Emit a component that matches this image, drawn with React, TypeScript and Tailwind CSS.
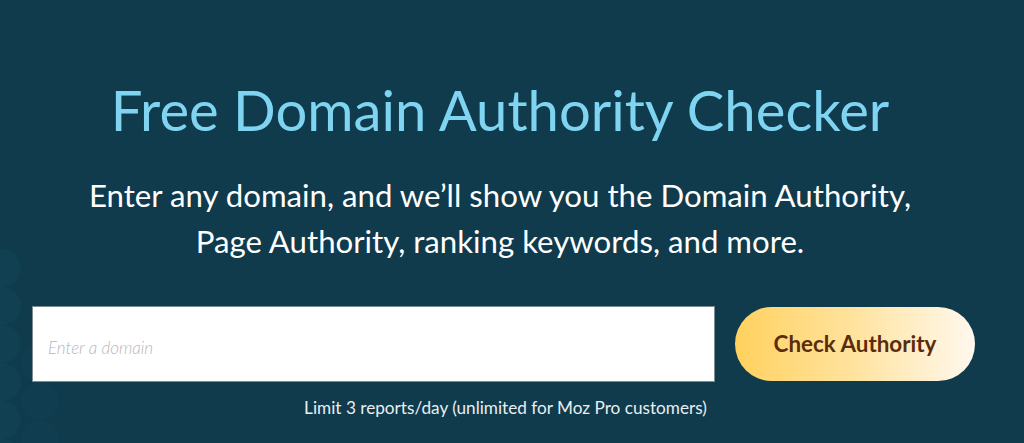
import { useState } from 'react'

// Faint circle pattern at the left edge
function DotPattern() {
  const rows = [268, 306, 344, 382, 420, 458]
  return (
    <svg className="pointer-events-none absolute left-0 top-0" width="80" height="443" viewBox="0 0 80 443" aria-hidden="true">
      {rows.map((y) => (
        <circle key={`a${y}`} cx="2" cy={y} r="19" fill="#134556" opacity="0.55" />
      ))}
      {rows.slice(2).map((y) => (
        <circle key={`b${y}`} cx="40" cy={y + 19} r="19" fill="#124354" opacity="0.4" />
      ))}
    </svg>
  )
}

export default function App() {
  const [domain, setDomain] = useState('')

  return (
    <div
      className="relative flex h-[443px] w-[1024px] flex-col items-center overflow-hidden bg-[#0f3b4d]"
      style={{ fontFamily: 'Lato, "Open Sans", sans-serif' }}
    >
      <DotPattern />

      <h1 className="relative mt-[78px] mr-[24px] text-[56.2px] font-normal leading-[64px] text-[#7fd4f2]">
        Free Domain Authority Checker
      </h1>

      <p className="relative mt-[30px] mr-[24px] text-center text-[31.2px] leading-[46px] text-white">
        Enter any domain, and we’ll show you the Domain Authority,
        <br />
        Page Authority, ranking keywords, and more.
      </p>

      <form
        className="relative mt-[42px] flex w-full items-center gap-[20px] pl-[32px] pr-[49px]"
        onSubmit={(e) => e.preventDefault()}
      >
        <input
          type="text"
          value={domain}
          onChange={(e) => setDomain(e.target.value)}
          placeholder="Enter a domain"
          className="h-[76px] w-[683px] border border-[#7d8c92] bg-white px-[15px] pt-[6px] text-[17px] font-light italic text-gray-800 placeholder:text-[#b5b9bb] focus:outline-none"
        />
        <button
          type="submit"
          className="flex h-[74px] flex-1 items-center justify-center rounded-full bg-gradient-to-r from-[#ffd15c] via-[#ffe39e] to-[#fff8ee] text-[22.4px] font-bold text-[#5b2c0c]"
        >
          Check Authority
        </button>
      </form>

      <p className="relative mt-[16px] mr-[13px] text-[17.2px] leading-[20px] text-[#e9eef0]">
        Limit 3 reports/day (unlimited for Moz Pro customers)
      </p>
    </div>
  )
}
